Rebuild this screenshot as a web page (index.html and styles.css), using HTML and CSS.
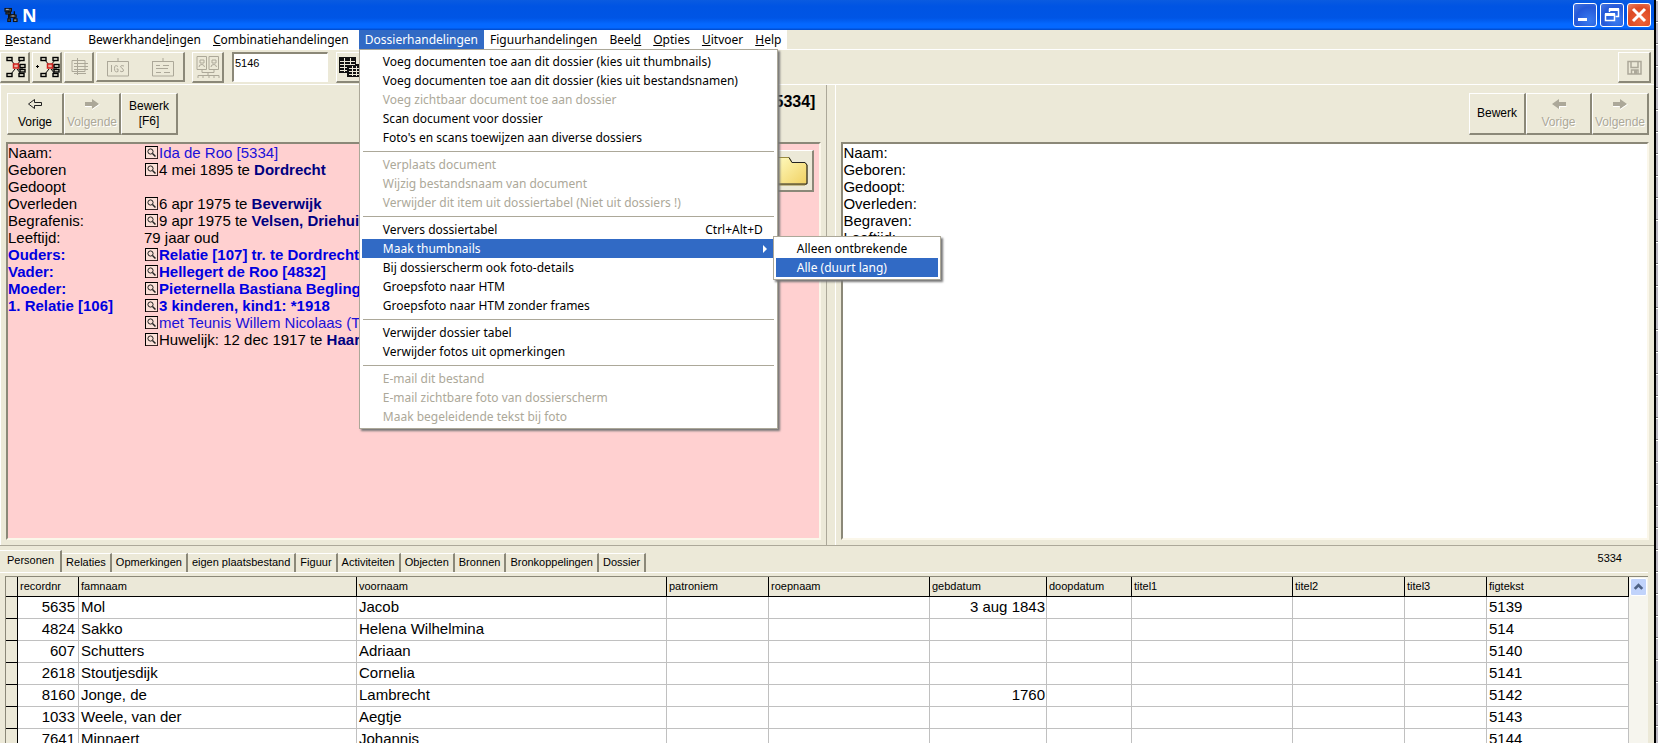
FILE: index.html
```html
<!DOCTYPE html>
<html lang="nl">
<head>
<meta charset="utf-8">
<title>N</title>
<link rel="stylesheet" href="styles.css">
</head>
<body>
<svg class="defs" aria-hidden="true">
  <symbol id="lens" viewBox="0 0 13 13">
    <rect x="0.5" y="0.5" width="12" height="12" fill="#fbe0d8" stroke="#000"/>
    <path d="M12.500 1V12.500H1" fill="none" stroke="#3a2626"/>
    <circle cx="5.500" cy="5.500" r="2.600" fill="none" stroke="#222"/>
    <path d="M7.500 7.500L10.500 10.500" stroke="#222" stroke-width="1.500"/>
  </symbol>
  <symbol id="tree" viewBox="0 0 20 22">
    <path d="M5 4L9 9M15 4L11 9M5 18L9 13M15 18L11 13M12 10H17M12 13H17" stroke="#000" fill="none"/>
    <g fill="#ece9d8" stroke="#000" stroke-width="1.400">
      <rect x="1" y="1.500" width="5" height="3"/><rect x="13" y="1.500" width="5" height="3"/>
      <rect x="14" y="8.500" width="5" height="3"/><rect x="14" y="13.500" width="5" height="2.500"/>
      <rect x="1" y="17.500" width="5" height="3"/><rect x="13" y="17.500" width="5" height="3"/>
    </g>
    <rect x="7.500" y="8" width="5" height="4" fill="#e8b0a0" stroke="#d0201c" stroke-width="1.500"/>
  </symbol>
  <symbol id="arrow-right" viewBox="0 0 16 12">
    <path d="M1 4H8V1L15 6L8 11V8H1Z" fill="#aca899"/>
    <path d="M8 11.500L15.500 6.500M1 8.500H7.500" stroke="#fff"/>
  </symbol>
  <symbol id="arrow-left" viewBox="0 0 16 12">
    <path d="M15 4H8V1L1 6L8 11V8H15Z" fill="#aca899"/>
    <path d="M8.500 11V8.500H15.500" stroke="#fff" fill="none"/>
  </symbol>
</svg>
<div class="screen">
<div class="window">
  <header class="titlebar">
    <svg class="app-icon" viewBox="0 0 16 16"><path d="M5 3V12M5 8H12M11 4V13" stroke="#111" stroke-width="1.500" fill="none"/><g fill="#444" stroke="#111"><rect x="1" y="1" width="7" height="3"/><rect x="2" y="5" width="5" height="2"/><rect x="6" y="8" width="7" height="2.500"/><rect x="4" y="12" width="3" height="3"/><rect x="10" y="12" width="4" height="3"/></g><path d="M2 2h3M8 9h3M11 13.500h2" stroke="#bbb"/></svg>
    <h1 class="app-title">N</h1>
    <div class="window-buttons">
      <button class="win-btn" aria-label="Minimaliseren"><svg viewBox="0 0 22 22"><rect x="4" y="14" width="9" height="3" fill="#fff"/></svg></button>
      <button class="win-btn" aria-label="Vorig formaat"><svg viewBox="0 0 22 22"><path d="M8.500 8V5.500H17.500V12.500H14.500M8 5.500H18" fill="none" stroke="#fff" stroke-width="1.500"/><path d="M8 5.500H18M4 10.500H14" stroke="#fff" stroke-width="3"/><rect x="4.500" y="10.500" width="9" height="6" fill="none" stroke="#fff" stroke-width="1.500"/></svg></button>
      <button class="win-btn close" aria-label="Sluiten"><svg viewBox="0 0 22 22"><path d="M5 5L17 17M17 5L5 17" stroke="#fff" stroke-width="3"/></svg></button>
    </div>
  </header>

  <nav class="menubar">
    <div class="menu-list">
      <button class="menu first"><u>B</u>estand</button>
      <button class="menu">Bewerkhande<u>l</u>ingen</button>
      <button class="menu"><u>C</u>ombinatiehandelingen</button>
      <div class="menu-holder">
        <button class="menu open" aria-expanded="true">Dossierhandelingen</button>
        <div class="popup main-popup">
          <button class="item">Voeg documenten toe aan dit dossier (kies uit thumbnails)</button>
          <button class="item">Voeg documenten toe aan dit dossier (kies uit bestandsnamen)</button>
          <button class="item" disabled>Voeg zichtbaar document toe aan dossier</button>
          <button class="item">Scan document voor dossier</button>
          <button class="item">Foto's en scans toewijzen aan diverse dossiers</button>
          <hr class="sep">
          <button class="item" disabled>Verplaats document</button>
          <button class="item" disabled>Wijzig bestandsnaam van document</button>
          <button class="item" disabled>Verwijder dit item uit dossiertabel (Niet uit dossiers !)</button>
          <hr class="sep">
          <button class="item"><span>Ververs dossiertabel</span><span>Ctrl+Alt+D</span></button>
          <div class="sub-holder">
            <button class="item selected" aria-expanded="true"><span>Maak thumbnails</span><svg class="sub-arrow" viewBox="0 0 4 8"><path d="M0 0L4 4L0 8Z" fill="#fff"/></svg></button>
            <div class="popup sub-popup">
              <button class="item">Alleen ontbrekende</button>
              <button class="item selected">Alle (duurt lang)</button>
            </div>
          </div>
          <button class="item">Bij dossierscherm ook foto-details</button>
          <button class="item">Groepsfoto naar HTM</button>
          <button class="item">Groepsfoto naar HTM zonder frames</button>
          <hr class="sep">
          <button class="item">Verwijder dossier tabel</button>
          <button class="item">Verwijder fotos uit opmerkingen</button>
          <hr class="sep">
          <button class="item" disabled>E-mail dit bestand</button>
          <button class="item" disabled>E-mail zichtbare foto van dossierscherm</button>
          <button class="item" disabled>Maak begeleidende tekst bij foto</button>
        </div>
      </div>
      <button class="menu">Figuurhandelingen</button>
      <button class="menu">Beel<u>d</u></button>
      <button class="menu"><u>O</u>pties</button>
      <button class="menu"><u>U</u>itvoer</button>
      <button class="menu"><u>H</u>elp</button>
    </div>
  </nav>

  <div class="toolbar">
    <button class="tool" aria-label="Stamboom"><svg class="ico-tree"><use href="#tree"/></svg></button>
    <button class="tool" aria-label="Stamboom uitgebreid"><svg class="ico-mark" viewBox="0 0 4 22"><path d="M0 10.500H3M1.500 9V12" stroke="#000"/></svg><svg class="ico-tree"><use href="#tree"/></svg></button>
    <button class="tool" aria-label="Lijst" disabled><svg class="ico-list" viewBox="0 0 20 20"><path d="M2 3.500H15V14.500H2ZM4 6.500H18M4 9.500H18M4 12.500H18M4 16.500H16M7.500 1V18" stroke="#aca899" fill="none"/></svg></button>
    <div class="tool-group">
      <button class="flat" aria-label="IGS" disabled><svg class="ico-card" viewBox="0 0 24 20"><path d="M1 4.500H22.500V19H1.500V4.500M12 1V4M5.500 8V15M12 9.500Q8.500 7 8.500 11.500Q8.500 16 12 14.500V12H10.500M18 9Q14.500 7.500 14.500 10Q18 12 17.500 14Q16 15.500 14 14" stroke="#aca899" fill="none"/></svg></button>
      <button class="flat" aria-label="Kaart" disabled><svg class="ico-card" viewBox="0 0 24 20"><path d="M1 4.500H22.500V19H1.500V4.500M12 1V4M5 8.500H9M12 8.500H18M5 11.500H17M5 15.500H10M13 15.500H19" stroke="#aca899" fill="none"/></svg></button>
    </div>
    <button class="tool photos" aria-label="Foto's" disabled><svg class="ico-photos" viewBox="0 0 26 24"><path d="M2 1.500H11.500V14.500H2ZM14 1.500H23.500V14.500H14ZM5 5V8H9V5ZM4 12Q4 9.500 7 9.500Q9 9.500 9.500 12M17 5V8H21V5ZM16 12Q16 9.500 19 9.500Q21 9.500 21.500 12M7 15V17.500H19V15M13 17V20M3 23V20.500H24V23M8 20.500V23M14 20.500V23M19 20.500V23" stroke="#aca899" fill="none"/></svg></button>
    <input class="number" type="text" value="5146" aria-label="Nummer">
    <button class="tool tables" aria-label="Tabellen"><svg class="ico-grid" viewBox="0 0 22 20"><path d="M0 0H17V7H22V20H8V16H0Z" fill="#111"/><path d="M1 4.500H16M1 7.500H16M1 10.500H8M1 13.500H8M5.500 1V15M11.500 1V7M10 11.500H21M10 14.500H21M10 17.500H21M13.500 9V19M17.500 9V19" stroke="#ece9d8"/></svg></button>
    <button class="tool save" aria-label="Opslaan" disabled><svg class="ico-save" viewBox="0 0 15 15"><path d="M1 1.500H14V14H1ZM4 1.500V7.500H11V1.500M4.500 14V10H11V14" stroke="#aca899" fill="none" stroke-width="1.500"/><rect x="7" y="10" width="3" height="4" fill="#aca899"/></svg></button>
  </div>

  <main class="panes">
    <section class="pane left-pane">
      <div class="pane-head">
        <button class="nav-btn"><svg class="arrow" viewBox="0 0 16 12"><path d="M14.500 4.500H7.500V1.500L1.500 6L7.500 10.500V7.500H14.500Z" fill="#ece9d8" stroke="#222"/></svg><span>Vorige</span></button><button class="nav-btn" disabled><svg class="arrow"><use href="#arrow-right"/></svg><span>Volgende</span></button><button class="nav-btn"><span>Bewerk</span><span>[F6]</span></button>
        <h2 class="person-id">[5334]</h2>
      </div>
      <div class="sheet pink">
        <dl class="facts">
          <dt>Naam:</dt><dd><svg class="lens"><use href="#lens"/></svg><a class="link" href="#">Ida de Roo [5334]</a></dd>
          <dt>Geboren</dt><dd><svg class="lens"><use href="#lens"/></svg>4 mei 1895 te <b>Dordrecht</b></dd>
          <dt>Gedoopt</dt><dd></dd>
          <dt>Overleden</dt><dd><svg class="lens"><use href="#lens"/></svg>6 apr 1975 te <b>Beverwijk</b></dd>
          <dt>Begrafenis:</dt><dd><svg class="lens"><use href="#lens"/></svg>9 apr 1975 te <b>Velsen, Driehuis</b></dd>
          <dt>Leeftijd:</dt><dd>79 jaar oud</dd>
          <dt class="rel">Ouders:</dt><dd class="rel"><svg class="lens"><use href="#lens"/></svg>Relatie [107] tr. te Dordrecht</dd>
          <dt class="rel">Vader:</dt><dd class="rel"><svg class="lens"><use href="#lens"/></svg>Hellegert de Roo [4832]</dd>
          <dt class="rel">Moeder:</dt><dd class="rel"><svg class="lens"><use href="#lens"/></svg>Pieternella Bastiana Beglinger</dd>
          <dt class="rel">1. Relatie [106]</dt><dd class="rel"><svg class="lens"><use href="#lens"/></svg>3 kinderen, kind1: *1918</dd>
          <dt></dt><dd><svg class="lens"><use href="#lens"/></svg><a class="link" href="#">met Teunis Willem Nicolaas (T</a></dd>
          <dt></dt><dd><svg class="lens"><use href="#lens"/></svg>Huwelijk: 12 dec 1917 te <b>Haarlem</b></dd>
        </dl>
        <button class="folder" aria-label="Dossiermap"><svg viewBox="0 0 34 30"><defs><linearGradient id="fg" x2="1" y2="1"><stop offset="0" stop-color="#fffbc0"/><stop offset="1" stop-color="#f0d060"/></linearGradient></defs><path d="M2 29V4L4 1.500H15L18 6.500H31L33 9V27L31 29Z" fill="url(#fg)" stroke="#9a8a40"/><path d="M15 1.500L18 6.500H31L33 9V28H4" fill="none" stroke="#222"/></svg></button>
      </div>
    </section>
    <section class="pane right-pane">
      <div class="pane-head end">
        <button class="nav-btn"><span>Bewerk</span></button><button class="nav-btn wide" disabled><svg class="arrow"><use href="#arrow-left"/></svg><span>Vorige</span></button><button class="nav-btn" disabled><svg class="arrow"><use href="#arrow-right"/></svg><span>Volgende</span></button>
      </div>
      <div class="sheet">
        <dl class="facts">
          <dt>Naam:</dt><dd></dd><dt>Geboren:</dt><dd></dd><dt>Gedoopt:</dt><dd></dd><dt>Overleden:</dt><dd></dd><dt>Begraven:</dt><dd></dd><dt>Leeftijd:</dt><dd></dd>
        </dl>
      </div>
    </section>
  </main>

  <section class="bottom">
    <div class="tab-row">
      <div class="tabs" role="tablist">
        <button class="tab active" role="tab" aria-selected="true">Personen</button><button class="tab" role="tab">Relaties</button><button class="tab" role="tab">Opmerkingen</button><button class="tab" role="tab">eigen plaatsbestand</button><button class="tab" role="tab">Figuur</button><button class="tab" role="tab">Activiteiten</button><button class="tab" role="tab">Objecten</button><button class="tab" role="tab">Bronnen</button><button class="tab" role="tab">Bronkoppelingen</button><button class="tab" role="tab">Dossier</button>
      </div>
      <span class="record">5334</span>
    </div>
    <div class="grid-area">
      <table class="records">
        <colgroup><col class="c-mark"><col class="c-nr"><col class="c-fam"><col class="c-voor"><col class="c-pat"><col class="c-roep"><col class="c-geb"><col class="c-doop"><col class="c-t1"><col class="c-t2"><col class="c-t3"><col></colgroup>
        <thead><tr><th></th><th>recordnr</th><th>famnaam</th><th>voornaam</th><th>patroniem</th><th>roepnaam</th><th>gebdatum</th><th>doopdatum</th><th>titel1</th><th>titel2</th><th>titel3</th><th>figtekst</th></tr></thead>
        <tbody>
          <tr><td class="mark"></td><td class="num">5635</td><td>Mol</td><td>Jacob</td><td></td><td></td><td class="date">3 aug 1843</td><td></td><td></td><td></td><td></td><td>5139</td></tr>
          <tr><td class="mark"></td><td class="num">4824</td><td>Sakko</td><td>Helena Wilhelmina</td><td></td><td></td><td></td><td></td><td></td><td></td><td></td><td>514</td></tr>
          <tr><td class="mark"></td><td class="num">607</td><td>Schutters</td><td>Adriaan</td><td></td><td></td><td></td><td></td><td></td><td></td><td></td><td>5140</td></tr>
          <tr><td class="mark"></td><td class="num">2618</td><td>Stoutjesdijk</td><td>Cornelia</td><td></td><td></td><td></td><td></td><td></td><td></td><td></td><td>5141</td></tr>
          <tr><td class="mark"></td><td class="num">8160</td><td>Jonge, de</td><td>Lambrecht</td><td></td><td></td><td class="date">1760</td><td></td><td></td><td></td><td></td><td>5142</td></tr>
          <tr><td class="mark"></td><td class="num">1033</td><td>Weele, van der</td><td>Aegtje</td><td></td><td></td><td></td><td></td><td></td><td></td><td></td><td>5143</td></tr>
          <tr><td class="mark"></td><td class="num">7641</td><td>Minnaert</td><td>Johannis</td><td></td><td></td><td></td><td></td><td></td><td></td><td></td><td>5144</td></tr>
        </tbody>
      </table>
      <div class="scrollbar"><button class="scroll-up" aria-label="Omhoog"><svg viewBox="0 0 16 17"><path d="M4 10.500L8 6.500L12 10.500" fill="none" stroke="#4d6185" stroke-width="3"/></svg></button></div>
    </div>
  </section>
</div>
<div class="backdrop"></div>
</div>
</body>
</html>
```

FILE: styles.css
```css
* { box-sizing: border-box; }

:root {
  --face: #ece9d8;
  --shade: #8b8878;
  --soft: #aca899;
  --select: #316ac5;
  --ui: "Liberation Sans", Arial, sans-serif;
  --menu: "Noto Sans", Tahoma, sans-serif;
}

body {
  margin: 0;
  background: var(--face);
  color: #000;
  font-family: var(--ui);
  font-size: 15px;
}

button {
  margin: 0;
  padding: 0;
  border: 0;
  background: none;
  color: inherit;
  font: inherit;
}

.defs { position: absolute; width: 0; height: 0; }

.screen { display: flex; height: 100vh; overflow: hidden; }
.window { flex: 1; min-width: 0; display: flex; flex-direction: column; }
.backdrop {
  width: 4px;
  border-left: 2px solid #000;
  background: repeating-linear-gradient(#fff 0 1px, #bdbac4 1px 21px, #77747c 21px 22px);
}

/* Title bar */
.titlebar {
  display: flex;
  align-items: center;
  height: 30px;
  padding: 0 3px 0 4px;
  background: linear-gradient(#0a5be0, #0054e3 20%, #0055e5 60%, #0468ff 80%, #0468ff 92%, #0048c8);
}
.app-icon { width: 15px; height: 16px; }
.app-title { margin: 0 0 0 3px; color: #fff; font: bold 18px var(--menu); line-height: 30px; }
.window-buttons { display: flex; gap: 3px; margin-left: auto; }
.win-btn {
  width: 24px;
  height: 24px;
  border: 1px solid #fff;
  border-radius: 3px;
  background: radial-gradient(circle at 70% 75%, #3a7bf0, #2458d8 60%, #4a78e0);
}
.win-btn svg { display: block; width: 22px; height: 22px; }
.win-btn.close { background: radial-gradient(circle at 60% 75%, #f0643a, #dc4a24 60%, #e88468); }

/* Menu bar */
.menubar { display: flex; height: 20px; border-bottom: 1px solid #fff; }
.menu-list { display: flex; background: #fff; font: 12px var(--menu); }
.menu { height: 19px; padding: 0 6px; line-height: 18px; white-space: nowrap; }
.menu.first { margin-right: 25px; padding-left: 5px; }
.menu.open { background: var(--select); color: #fff; }
.menu-holder, .sub-holder { position: relative; }
.menu-holder { margin-left: 4px; }
.popup {
  position: absolute;
  z-index: 5;
  padding: 2px;
  border: 1px solid var(--soft);
  background: #fff;
  box-shadow: 2px 2px 2px #777;
}
.main-popup { top: 19px; left: 0; width: 419px; }
.sub-popup { top: -3px; left: 411px; width: 168px; }
.item {
  display: flex;
  justify-content: space-between;
  align-items: center;
  width: 100%;
  height: 19px;
  padding: 0 12px 0 21px;
  line-height: 19px;
  text-align: left;
  white-space: nowrap;
}
.item:disabled { color: var(--soft); }
.item.selected { background: var(--select); color: #fff; }
.sub-arrow { width: 4px; height: 8px; margin-right: -4px; }
.sep { height: 1px; margin: 4px 1px 3px; border: 0; background: var(--soft); }

/* Toolbar */
.toolbar {
  display: flex;
  gap: 2px;
  height: 35px;
  padding: 2px 3px 2px 0;
  border-bottom: 1px solid #fff;
}
.tool, .tool-group, .nav-btn, .folder {
  border: 1px solid #fff;
  border-right: 2px solid var(--shade);
  border-bottom: 2px solid var(--shade);
  background: var(--face);
}
.tool { display: flex; align-items: center; justify-content: center; width: 30px; height: 31px; padding-left: 2px; }
.tool-group { display: flex; align-items: center; justify-content: space-between; width: 89px; padding: 0 8px 0 9px; }
.tool.photos { width: 32px; margin: 0 6px 0 5px; padding: 0; }
.tool.tables { justify-content: flex-start; }
.tool.save { width: 33px; margin-left: auto; padding: 0; }
.number {
  width: 96px;
  height: 30px;
  margin-right: 6px;
  padding: 0 1px 10px;
  border: 1px solid #fff;
  border-top: 2px solid var(--shade);
  border-left: 2px solid var(--shade);
  background: #fff;
  font: 11px var(--ui);
}
.ico-tree { flex: none; width: 20px; height: 22px; }
.ico-mark { width: 4px; height: 22px; }
.ico-list, .ico-grid { flex: none; width: 22px; height: 20px; }
.ico-card { display: block; width: 24px; height: 20px; }
.ico-photos { width: 26px; height: 24px; }
.ico-save { width: 15px; height: 15px; }

/* Person panes */
.panes { flex: 141 1 0; min-height: 0; display: flex; gap: 8px; border-bottom: 1px solid var(--soft); }
.pane { display: flex; flex-direction: column; padding: 7px 5px 5px; border-left: 1px solid #fff; }
.left-pane { flex: 827 1 0; border-right: 1px solid var(--soft); }
.right-pane { flex: 819 1 0; }
.pane-head { display: flex; height: 50px; padding: 1px 0 0 1px; }
.pane-head.end { justify-content: flex-end; }
.nav-btn {
  display: flex;
  flex-direction: column;
  align-items: center;
  justify-content: center;
  gap: 2px;
  width: 57px;
  height: 42px;
  font-size: 12px;
  line-height: 13px;
}
.nav-btn.wide { width: 66px; }
.nav-btn:disabled { color: var(--soft); text-shadow: 1px 1px #fff; }
.arrow { width: 16px; height: 12px; margin-bottom: 4px; }
.person-id { margin: 0 6px 0 auto; font-size: 16px; line-height: 17px; }
.sheet {
  flex: 1;
  display: flex;
  min-height: 0;
  border: 2px solid #fbf7ea;
  border-top-color: var(--shade);
  border-left-color: var(--shade);
  background: #fff;
}
.sheet.pink { background: #ffd0d0; }
.facts {
  flex: 1;
  display: grid;
  grid-template-columns: 136px 1fr;
  grid-auto-rows: 17px;
  margin: 0;
  line-height: 17px;
  white-space: nowrap;
}
.facts dd { display: flex; margin: 0; white-space: pre; }
.facts b { color: #000080; }
.facts .rel { color: #0000e0; font-weight: bold; }
.link { color: #1a10d8; text-decoration: none; }
.lens { width: 13px; height: 13px; margin: 2px 1px 0; }
.folder { width: 76px; height: 42px; margin: 6px 5px 0 0; text-align: right; }
.folder svg { width: 34px; height: 30px; margin: 3px 4px 0 0; }

/* Record grid */
.bottom { flex: 59 1 0; min-height: 0; display: flex; flex-direction: column; padding: 5px 6px 0 0; }
.tab-row { display: flex; justify-content: space-between; height: 22px; border-bottom: 1px solid #fff; }
.tabs { display: flex; align-items: flex-end; }
.tab {
  height: 19px;
  padding: 0 4px;
  border-top: 1px solid #fff;
  border-right: 2px solid var(--shade);
  font-size: 11px;
  line-height: 17px;
}
.tab.active { height: 22px; padding: 0 6px 2px 7px; }
.record { margin-right: 26px; font-size: 11px; line-height: 14px; }
.grid-area {
  flex: 1;
  min-height: 0;
  display: flex;
  margin: 3px 0 0 5px;
  border-top: 1px solid var(--shade);
  border-left: 1px solid var(--shade);
  background: #fff;
  overflow: hidden;
}
.records { flex: 1; width: 0; table-layout: fixed; border-collapse: separate; border-spacing: 0; align-self: flex-start; }
.records th {
  height: 20px;
  padding: 0 2px;
  border-right: 1px solid #000;
  border-bottom: 1px solid #000;
  background: #ebe8d8;
  font-size: 11px;
  font-weight: normal;
  text-align: left;
}
.records td {
  height: 22px;
  padding: 0 2px;
  border-right: 1px solid #c0c0c0;
  border-bottom: 1px solid #c0c0c0;
  line-height: 18px;
  white-space: nowrap;
}
.records td.num { padding-right: 3px; text-align: right; }
.records td.date { padding-right: 1px; text-align: right; }
.records .mark { border-color: #000; background: var(--face); }
.c-mark { width: 12px; }
.c-nr { width: 61px; }
.c-fam { width: 278px; }
.c-voor { width: 310px; }
.c-pat { width: 102px; }
.c-roep { width: 161px; }
.c-geb { width: 117px; }
.c-doop { width: 85px; }
.c-t1 { width: 161px; }
.c-t2 { width: 112px; }
.c-t3 { width: 82px; }
.scrollbar { width: 19px; padding: 1px; background: #f6f5ee; }
.scroll-up { display: block; width: 17px; height: 18px; border: 1px solid #fff; border-radius: 2px; background: #c1d3fb; }
.scroll-up svg { display: block; width: 15px; height: 16px; }
```
